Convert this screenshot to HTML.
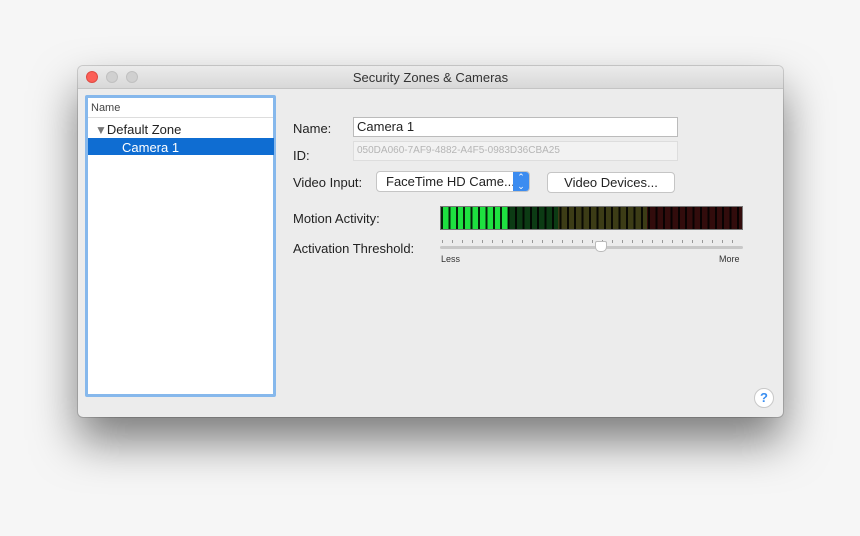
<!DOCTYPE html>
<html><head><style>
body{margin:0;width:860px;height:536px;background:#f6f6f6;position:relative;overflow:hidden;font-family:"Liberation Sans",sans-serif;}
.win{position:absolute;left:78px;top:66px;width:705px;height:351px;background:#ececec;border-radius:5px;box-shadow:0 24px 45px rgba(0,0,0,.5),0 0 0 1px rgba(0,0,0,.15);overflow:hidden}
.tb{height:22px;background:linear-gradient(#ebebeb,#d8d8d8);border-bottom:1px solid #c4c4c4;text-align:center;font-size:13px;line-height:24px;color:#333}
.dot{position:absolute;top:5px;width:12px;height:12px;border-radius:50%;background:#d0d0d0;border:1px solid #c0c0c0;box-sizing:border-box}
.abs{position:absolute}
.lbl{position:absolute;font-size:13px;color:#222}
</style></head><body>
<div class="win">
<div class="tb">Security Zones &amp; Cameras</div>
<div class="dot" style="left:8px;background:#fc5f57;border-color:#de4a42"></div>
<div class="dot" style="left:28px"></div>
<div class="dot" style="left:48px"></div>
<div class="abs" style="left:7px;top:29px;width:191px;height:302px;background:#fff;border:3px solid #86b8ec;box-sizing:border-box;border-radius:2px"></div>
<div class="abs" style="left:10px;top:32px;width:185px;height:20px;border-bottom:1px solid #ddd;font-size:11px;color:#444;line-height:20px;padding-left:3px;box-sizing:border-box">Name</div>
<div class="lbl" style="left:17px;top:56px"><span style="color:#777;font-size:12px">▼</span>Default Zone</div>
<div class="abs" style="left:10px;top:72px;width:186px;height:17px;background:#0f6dd2"></div>
<div class="lbl" style="left:44px;top:74px;color:#fff">Camera 1</div>

<div class="lbl" style="left:215px;top:55px">Name:</div>
<div class="abs" style="left:275px;top:51px;width:325px;height:20px;background:#fff;border:1px solid #bbb;box-sizing:border-box;font-size:13px;line-height:18px;padding-left:3px;color:#222">Camera 1</div>
<div class="lbl" style="left:215px;top:82px">ID:</div>
<div class="abs" style="left:275px;top:75px;width:325px;height:20px;background:#f2f2f2;border:1px solid #ddd;box-sizing:border-box;font-size:10px;line-height:18px;padding-left:3px;color:#b5b5b5">050DA060-7AF9-4882-A4F5-0983D36CBA25</div>
<div class="lbl" style="left:215px;top:109px">Video Input:</div>
<div class="abs" style="left:298px;top:105px;width:154px;height:21px;background:#fff;border:1px solid #c5c5c5;box-sizing:border-box;border-radius:4px;font-size:13px;line-height:19px;padding-left:9px;color:#222;overflow:hidden">FaceTime HD Came...<div class="abs" style="right:0;top:0;width:16px;height:19px;background:#3c8cf0;color:#fff;font-size:9px;line-height:9px;text-align:center;padding-top:1px">⌃<br>⌄</div></div>
<div class="abs" style="left:469px;top:106px;width:128px;height:21px;background:#fff;border:1px solid #c5c5c5;box-sizing:border-box;border-radius:4px;font-size:13px;line-height:19px;text-align:center;color:#222">Video Devices...</div>
<div class="lbl" style="left:215px;top:145px">Motion Activity:</div>
<div class="abs" style="left:362px;top:140px;width:303px;height:24px;background:#777;padding:1px;box-sizing:border-box">
<div style="width:100%;height:100%;background:repeating-linear-gradient(90deg,rgba(0,0,0,.85) 0 2px,transparent 2px 7.4px),linear-gradient(90deg,#1ee040 0 67px,#0c3b14 67px 117px,#3c3c16 117px 206px,#320c0c 206px)"></div></div>
<div class="lbl" style="left:215px;top:175px">Activation Threshold:</div>
<div class="abs" style="left:364px;top:174px;width:298px;height:3px;background:repeating-linear-gradient(90deg,#999 0 1px,transparent 1px 10px)"></div>
<div class="abs" style="left:362px;top:180px;width:303px;height:3px;background:#c8c8c8;border-radius:2px"></div>
<div class="abs" style="left:517px;top:175px;width:12px;height:11px;background:#fff;border:1px solid #bbb;border-radius:2px 2px 5px 5px;box-sizing:border-box"></div>
<div class="abs" style="left:363px;top:188px;font-size:9px;color:#333">Less</div>
<div class="abs" style="left:641px;top:188px;font-size:9px;color:#333">More</div>
<div class="abs" style="left:676px;top:322px;width:20px;height:20px;border-radius:50%;background:#fff;border:1px solid #c8c8c8;box-sizing:border-box;text-align:center;font-size:13px;font-weight:bold;line-height:18px;color:#3a8ef0">?</div>
</div>
</body></html>
